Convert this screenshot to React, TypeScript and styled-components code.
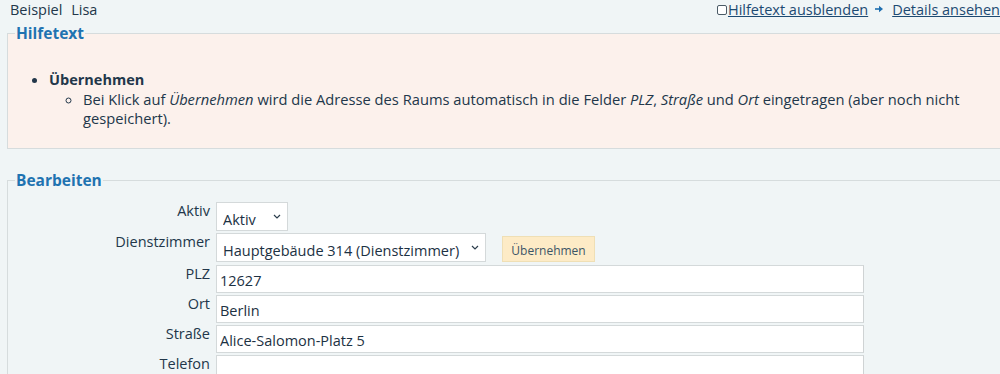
import React from "react";
import styled, { createGlobalStyle } from "styled-components";

const GlobalStyle = createGlobalStyle`
  html, body {
    margin: 0;
    padding: 0;
    background: #f0f5f6;
    overflow: hidden;
  }
  body {
    font-family: "Open Sans", "Noto Sans", sans-serif;
    color: #22374a;
    font-size: 14.5px;
  }
`;

const Page = styled.div`
  width: 1014px;
  padding: 0 0 0 7px;
  box-sizing: border-box;
`;

const TopBar = styled.div`
  display: flex;
  justify-content: space-between;
  align-items: flex-start;
  height: 23px;
  line-height: 20px;
  padding-left: 3px;
  padding-right: 14px;
`;

const UserName = styled.span`
  font-size: 14.5px;
  word-spacing: 5px;
`;

const TopLinks = styled.div`
  display: flex;
  align-items: center;
  font-size: 14.5px;
`;

const Check = styled.span`
  display: inline-block;
  width: 8px;
  height: 8px;
  border: 1px solid #4b5b66;
  border-radius: 2px;
  margin-right: 1px;
  background: #fff;
`;

const Link = styled.a`
  color: #1d4a72;
  text-decoration: underline;
  cursor: pointer;
`;

const ArrowIcon = styled.svg`
  width: 10px;
  height: 10px;
  margin: 0 8px 2px 6px;
`;

const Fieldset = styled.fieldset<{ $tone?: "help" | "plain" }>`
  margin: 0;
  padding: 0 10px;
  border: 1px solid #d6dcdd;
  border-right: none;
  background: ${(p) => (p.$tone === "help" ? "#fcf1ec" : "transparent")};
  min-width: 0;
`;

const Legend = styled.legend`
  font-size: 15.5px;
  font-weight: 700;
  color: #1f73b1;
  padding: 0 1px;
  margin-left: -3px;
  line-height: 20px;
`;

const HelpList = styled.ul`
  margin: 26px 0 20px 0;
  padding-left: 31px;
  width: 950px;
  line-height: 20px;
  font-size: 14.7px;
  list-style: disc;
`;

const HelpTitle = styled.span`
  font-weight: 700;
  font-size: 14.5px;
`;

const SubList = styled.ul`
  margin: 0;
  padding-left: 34px;
  list-style: circle;
  line-height: 19px;
`;

const EditFieldset = styled(Fieldset)`
  margin-top: 21px;
  padding-bottom: 40px;
`;

const Form = styled.div`
  display: grid;
  grid-template-columns: 192px auto;
  column-gap: 6px;
  row-gap: 2px;
  margin-top: 12px;
  align-items: start;
`;

const Label = styled.label<{ $gapAbove?: number }>`
  text-align: right;
  font-size: 14.5px;
  line-height: 18px;
  padding-top: 0;
  margin-top: ${(p) => p.$gapAbove ?? 0}px;
  color: #22374a;
`;

const FieldRow = styled.div<{ $gapAbove?: number }>`
  display: flex;
  align-items: flex-end;
  margin-top: ${(p) => p.$gapAbove ?? 0}px;
`;

const SelectWrap = styled.div`
  position: relative;
  display: inline-flex;
`;

const Select = styled.select<{ $w: number }>`
  appearance: none;
  -webkit-appearance: none;
  width: ${(p) => p.$w}px;
  height: 29px;
  box-sizing: border-box;
  border: 1px solid #d4d9da;
  background: #fff;
  font-family: "Open Sans", sans-serif;
  font-size: 14.5px;
  color: #1c3143;
  padding: 5px 20px 0 6px;
  border-radius: 0;
  outline: none;
`;

const Chevron = styled.svg`
  position: absolute;
  right: 7px;
  top: 12px;
  width: 8px;
  height: 5px;
  pointer-events: none;
`;

const TextInput = styled.input`
  width: 648px;
  height: 28px;
  box-sizing: border-box;
  border: 1px solid #d4d9da;
  border-right-color: #cfd3d4;
  background: #fff;
  font-family: "Open Sans", sans-serif;
  font-size: 14.5px;
  color: #1c3143;
  padding: 3px 4px 0 3px;
  outline: none;
`;

const Button = styled.button`
  margin-left: 16px;
  height: 26px;
  width: 93px;
  background: #fdebc6;
  border: 1px solid #efdfb5;
  color: #3c5566;
  font-family: "Open Sans", sans-serif;
  font-size: 12px;
  padding: 2px 0 0;
  cursor: pointer;
`;

function Dropdown({ width, value, text }: { width: number; value: string; text: string }) {
  return (
    <SelectWrap>
      <Select $w={width} defaultValue={value}>
        <option value={value}>{text}</option>
      </Select>
      <Chevron viewBox="0 0 8 5">
        <path d="M1 1 L4 4 L7 1" fill="none" stroke="#2c3e4c" strokeWidth="1.2" />
      </Chevron>
    </SelectWrap>
  );
}

export default function App() {
  return (
    <>
      <GlobalStyle />
      <Page>
        <TopBar>
          <UserName>Beispiel Lisa</UserName>
          <TopLinks>
            <Check />
            <Link>Hilfetext ausblenden</Link>
            <ArrowIcon viewBox="0 0 10 10">
              <path d="M1 5 H6" stroke="#1f6fb0" strokeWidth="1.6" />
              <path d="M5 1.8 L9 5 L5 8.2 Z" fill="#1f6fb0" />
            </ArrowIcon>
            <Link>Details ansehen</Link>
          </TopLinks>
        </TopBar>

        <Fieldset $tone="help">
          <Legend>Hilfetext</Legend>
          <HelpList>
            <li>
              <HelpTitle>Übernehmen</HelpTitle>
              <SubList>
                <li>
                  Bei Klick auf <i>Übernehmen</i> wird die Adresse des Raums automatisch in die Felder{" "}
                  <i>PLZ</i>, <i>Straße</i> und <i>Ort</i> eingetragen (aber noch nicht gespeichert).
                </li>
              </SubList>
            </li>
          </HelpList>
        </Fieldset>

        <EditFieldset>
          <Legend>Bearbeiten</Legend>
          <Form>
            <Label>Aktiv</Label>
            <FieldRow>
              <Dropdown width={72} value="aktiv" text="Aktiv" />
            </FieldRow>

            <Label>Dienstzimmer</Label>
            <FieldRow>
              <Dropdown width={270} value="hg314" text="Hauptgebäude 314 (Dienstzimmer)" />
              <Button>Übernehmen</Button>
            </FieldRow>

            <Label $gapAbove={1}>PLZ</Label>
            <FieldRow $gapAbove={1}>
              <TextInput defaultValue="12627" />
            </FieldRow>

            <Label>Ort</Label>
            <FieldRow>
              <TextInput defaultValue="Berlin" />
            </FieldRow>

            <Label>Straße</Label>
            <FieldRow>
              <TextInput defaultValue="Alice-Salomon-Platz 5" />
            </FieldRow>

            <Label>Telefon</Label>
            <FieldRow>
              <TextInput defaultValue="" />
            </FieldRow>
          </Form>
        </EditFieldset>
      </Page>
    </>
  );
}
